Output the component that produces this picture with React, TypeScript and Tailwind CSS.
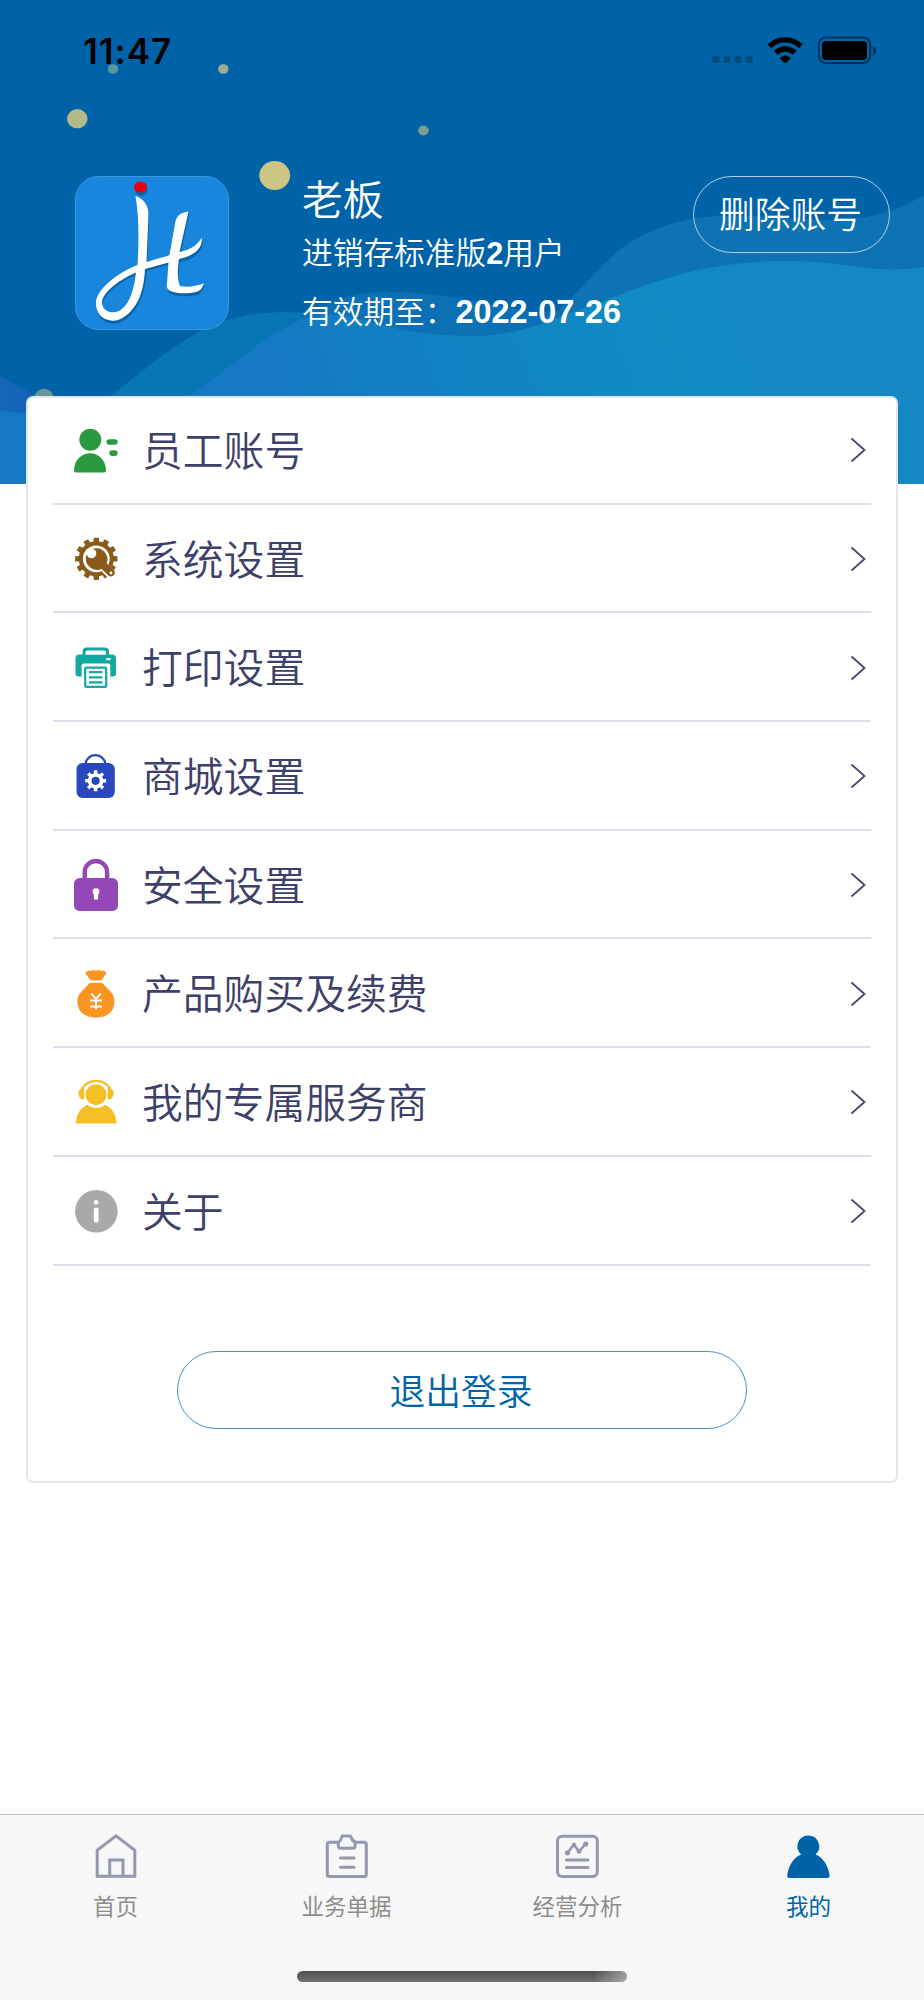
import React from "react";

const cjk = "font-['Noto_Sans_CJK_SC',sans-serif]";

function gearPath(cx: number, cy: number, teeth: number, outer: number, inner: number, fill = 0.5) {
  const step = (Math.PI * 2) / teeth;
  const pts: string[] = [];
  for (let i = 0; i < teeth; i++) {
    const a = i * step - Math.PI / 2;
    const half = (step * fill) / 2;
    const corners: [number, number][] = [
      [a - half * 1.15, inner],
      [a - half * 0.9, outer],
      [a + half * 0.9, outer],
      [a + half * 1.15, inner],
    ];
    for (const [t, r] of corners) {
      pts.push(`${(cx + Math.cos(t) * r).toFixed(2)} ${(cy + Math.sin(t) * r).toFixed(2)}`);
    }
  }
  return `M${pts.join("L")}Z`;
}

function Icon({ children }: { children: React.ReactNode }) {
  return (
    <svg width="46" height="54" viewBox="0 0 46 54" className="block shrink-0" fill="none">
      {children}
    </svg>
  );
}

const StaffIcon = () => (
  <Icon>
    <g fill="#2b9a3e">
      <circle cx="16.3" cy="16.7" r="11" />
      <path d="M0 47.5C0 37 7.5 30.3 16 30.3S32 37 32 47.5Q32 49.5 30 49.5H2Q0 49.5 0 47.5Z" />
      <rect x="32.5" y="16.2" width="11.2" height="5.6" rx="2.8" />
      <rect x="35.3" y="27.3" width="8.4" height="5.6" rx="2.8" />
    </g>
  </Icon>
);

const SystemIcon = () => (
  <Icon>
    <path d={gearPath(22.3, 26.8, 12, 21.3, 17.6, 0.52)} fill="#8a5a19" />
    <circle cx="22.3" cy="26.8" r="13.4" fill="#fff" />
    <path d="M30 35 37.500 42.500" stroke="#fff" strokeWidth="9.500" strokeLinecap="round" />
    <path
      d="M18.8 16.800A11.200 11.200 0 0 1 32.800 31.200L40 38.200A3.900 3.900 0 0 1 34.5 43.6L27.500 37A11.200 11.200 0 0 1 12.600 22.800L14.800 25.800 19.200 26.200 22.3 23.200 22 19Z"
      fill="#8a5a19"
    />
    <circle cx="37" cy="41" r="1.4" fill="#fff" />
  </Icon>
);

const PrintIcon = () => (
  <Icon>
    <g fill="#12a9a2">
      <path d="M8.6 13.500V10.5Q8.6 6.5 12.6 6.5H31Q35 6.5 35 10.5V13.500H38Q42 13.500 42 17.500V32.5Q42 35.5 39 35.5H36.3V24.5Q36.3 22.5 34.3 22.5H9.6Q7.6 22.5 7.6 24.5V35.5H4.5Q1.5 35.5 1.5 32.5V17.500Q1.5 13.500 5.5 13.500ZM11.5 13.800H32V11.6Q32 9.6 30 9.6H13.5Q11.5 9.6 11.5 11.6Z" />
    </g>
    <rect x="32" y="17" width="4.8" height="2.2" rx="1.1" fill="#fff" />
    <rect x="11.2" y="26.6" width="21" height="19.3" rx="1.2" fill="#fff" stroke="#12a9a2" strokeWidth="2.2" />
    <path d="M15 31.2H28.4M15 36.3H28.4M15 41.4H28.4" stroke="#12a9a2" strokeWidth="2.3" />
  </Icon>
);

const MallIcon = () => (
  <Icon>
    <path d="M11.4 15C13.2 3.2 29.6 3.2 31.5 15" stroke="#2948bd" strokeWidth="2.4" />
    <rect x="2.5" y="14" width="38.3" height="35" rx="6.2" fill="#2948bd" />
    <path d={gearPath(21.6, 31.8, 8, 10.6, 7.8, 0.48)} fill="#fff" />
    <circle cx="21.6" cy="31.8" r="4.1" fill="#2948bd" />
  </Icon>
);

const LockIcon = () => (
  <Icon>
    <path d="M10.7 22V14A11.2 11 0 0 1 33.1 14V22" stroke="#9448b5" strokeWidth="4.4" />
    <rect x="0" y="20" width="44" height="33" rx="5.6" fill="#9448b5" />
    <circle cx="22" cy="33.700" r="3.4" fill="#fff" />
    <rect x="19.900" y="34" width="4.200" height="8" rx="2" fill="#fff" />
  </Icon>
);

const MoneyIcon = () => (
  <Icon>
    <g fill="#f99520">
      <path d="M11.2 6.2Q13.6 2.4 17 4 19.2 2 22 4 24.7 2 27 4 30.6 2.4 32.4 6.2L28.4 12Q27.4 13.400 25.8 13.400H18.2Q16.6 13.400 15.6 12Z" />
      <path d="M16 15.8H28L36.5 24.6Q40.4 28.5 40.4 34.5C40.4 44.5 33.5 50.5 22 50.5S3.4 44.5 3.4 34.5Q3.4 28.5 7.5 24.6Z" />
    </g>
    <path d="M17 26.4 22 31.8 27 26.4M22 31.8V42.3M16 33.6H28M16 39.4H28" stroke="#fff" strokeWidth="2" />
  </Icon>
);

const ServiceIcon = () => (
  <Icon>
    <g fill="#f5be24">
      <circle cx="22" cy="19.7" r="10.5" />
      <path d="M2 48.6C2 38.5 7 32.5 13.3 29.7Q17.3 33 22.2 33T31 29.7C37.5 32.5 42.4 38.5 42.4 48.6Z" />
      <path d="M10.3 12.5V24.6C2.600 24.5 2.600 12.6 10.3 12.5Z" />
      <path d="M33.7 12.5V24.6C41.6 24.5 41.6 12.6 33.7 12.5Z" />
    </g>
    <path d="M8.2 13.5C14.5 3.3 29.7 3.3 36 13.5" stroke="#f5be24" strokeWidth="2.2" />
  </Icon>
);

const AboutIcon = () => (
  <Icon>
    <circle cx="22.4" cy="27.3" r="21.3" fill="#a9a9a9" />
    <circle cx="22.2" cy="18.3" r="2.3" fill="#fff" />
    <rect x="19.8" y="23.4" width="4.8" height="15.4" rx="2.4" fill="#fff" />
  </Icon>
);

const menu = [
  { label: "员工账号", icon: StaffIcon },
  { label: "系统设置", icon: SystemIcon },
  { label: "打印设置", icon: PrintIcon },
  { label: "商城设置", icon: MallIcon },
  { label: "安全设置", icon: LockIcon },
  { label: "产品购买及续费", icon: MoneyIcon },
  { label: "我的专属服务商", icon: ServiceIcon },
  { label: "关于", icon: AboutIcon },
];

function Backdrop() {
  return (
    <svg className="absolute left-0 top-0 block" width="924" height="484" viewBox="0 0 924 484">
      <defs>
        <linearGradient id="front" x1="180" y1="450" x2="740" y2="250" gradientUnits="userSpaceOnUse">
          <stop offset="0" stopColor="#1678c6" />
          <stop offset="0.2" stopColor="#1579c3" />
          <stop offset="0.5" stopColor="#1083c3" />
          <stop offset="0.8" stopColor="#118bc3" />
          <stop offset="1" stopColor="#1488c3" />
        </linearGradient>
        <linearGradient id="corner" x1="0" y1="0" x2="60" y2="0" gradientUnits="userSpaceOnUse">
          <stop offset="0" stopColor="#1466b9" />
          <stop offset="1" stopColor="#1060b0" />
        </linearGradient>
      </defs>
      <rect width="924" height="484" fill="#0063a7" />
      <path d="M530 336C570 302 590 276 619 250C645 231 680 216 730 215.500C790 216 820 224 866 217C890 213 908 204 924 195V400H530Z" fill="#0d73b3" />
      <path d="M110 396C145 370 190 330 225 321C250 312 275 311 310 313L340 340V400H105Z" fill="#0776b4" />
      <path d="M290 322C320 306 340 293 385 292C440 292 480 301 515 309C535 313 550 312 568 310L530 360H300Z" fill="#0b70b4" />
      <path d="M188 396C225 372 258 340 300 320C325 311 345 315 370 322C400 331 440 337 482 336C530 333 560 315 600 303C660 276 720 261 782 261C840 261 850 269 892 269.500C905 269.500 915 268 924 267V484H188Z" fill="url(#front)" />
      <path d="M0 376 37 396V420H0Z" fill="url(#corner)" />
      <path d="M0 410Q14 413 40 413.500V484H0Z" fill="#1678c4" />
      <circle cx="44" cy="398.500" r="9.800" fill="#67959a" />
      <g>
        <ellipse cx="113" cy="69" rx="5.200" ry="4.800" fill="#5e94a0" />
        <ellipse cx="223.300" cy="69" rx="5.200" ry="4.800" fill="#9dae92" />
        <ellipse cx="77.300" cy="118.700" rx="10.300" ry="9.600" fill="#b2b98b" />
        <ellipse cx="423.500" cy="130.500" rx="5.200" ry="4.900" fill="#7b9e94" />
        <ellipse cx="274.700" cy="175.500" rx="15.400" ry="14.400" fill="#cdc584" />
      </g>
    </svg>
  );
}

function Logo() {
  return (
    <svg width="154" height="154" viewBox="0 0 154 154" className="block shrink-0">
      <rect x="0.500" y="0.500" width="153" height="153" rx="23" fill="#1786dc" stroke="#3a97e0" />
      <g transform="translate(.8 2)" fill="#0b5797" opacity="0.75">
        <ellipse cx="65.500" cy="12" rx="6.200" ry="5.700" />
        <path d="M60.500 20C68 22 73.500 29 73.500 38L71.500 88C86 82 90 82 94.500 80L100.500 45C102.500 39 105.500 37 113.500 35.500L104.500 77.500C116 75 123.500 69 126.500 61.500C128.500 72 119 82 104 84C102 97 102.500 104 105 110C112 112 121 110 128.800 107.500C127 113 125 116 121 117C114 118.500 102 119 97 116.500C92 115 91.500 112 92 108L93.500 86.500L71 93C70 112 65 126 55 137C49 143 43 146.500 36 145.500C26 144.500 20.500 137 21 127C22 113 42 97 62.500 89C64 65 64 40 60.500 20ZM61 96.500C42 105 27 117 27 127C28 136 37 138 44 135C55 129 59 113 61 96.500Z" fillRule="evenodd" />
      </g>
      <ellipse cx="65.500" cy="11" rx="6.500" ry="5.500" fill="#e60012" />
      <path d="M60.500 20C68 22 73.500 29 73.500 38L71.500 86C84 82 90 81 94.500 79L100.500 45C102.500 39 105.500 37 113.500 35.500L104.500 76C116 74 123.500 68 126.500 61.500C128.500 72 119 80 104 83C102 97 102.500 104 105 110C112 112 121 110 128.800 107.500C127 113 125 115 121 116C114 117.500 102 118 97 115.500C92 114 91.500 111 92 107L93.500 86.500L70 93C69 112 65 126 55 136C49 142 43 145.500 36 144.500C26 143.500 20.500 136 21 126C22 113 42 97 62.500 89C64 65 64 40 60.500 20ZM61 96.500C42 105 27 117 27 127C28 136 37 138 44 135C55 129 59 113 61 96.500Z" fill="#fff" fillRule="evenodd" />
    </svg>
  );
}

function StatusBar() {
  return (
    <div className="flex h-[100px] items-start justify-between pl-[83px] pr-[46px]">
      <div className="mt-[28.5px] font-['Inter',sans-serif] text-[35px] font-semibold leading-[44px] tracking-[1px] text-black">11:47</div>
      <svg width="168" height="34" viewBox="710 33 168 34" className="mt-[33px] block">
        <g fill="#000" opacity="0.22">
          <rect x="712" y="56" width="7.500" height="7" rx="2" />
          <rect x="723" y="56" width="7.500" height="7" rx="2" />
          <rect x="734.200" y="56" width="7.500" height="7" rx="2" />
          <rect x="745.400" y="56" width="7.500" height="7" rx="2" />
        </g>
        <g fill="none" stroke="#000" strokeWidth="5.400">
          <path d="M769.500 46.300A22.500 22.500 0 0 1 801 46.300" />
          <path d="M775.800 52.800A13.600 13.600 0 0 1 794.700 52.800" />
        </g>
        <path d="M785.300 63 779.900 58.300Q785.300 53 790.700 58.300Z" fill="#000" stroke="#000" strokeWidth="0.500" />
        <rect x="818.800" y="37.500" width="51.400" height="25.500" rx="7" fill="none" stroke="#00355b" strokeWidth="2" />
        <rect x="822" y="41" width="45" height="19" rx="4" fill="#000" />
        <path d="M873 46.200Q876.200 47.500 876.200 50.500T873 55.200Z" fill="#00355b" />
      </svg>
    </div>
  );
}

const HomeIcon = () => (
  <path d="M97.200 1850.200 116 1835.800 134.800 1850.200V1876.200H97.200ZM109.700 1876V1860H123V1876" />
);
const BillIcon = () => (
  <>
    <path d="M339 1842.300H329.500Q327.500 1842.300 327.500 1844.300V1874.500Q327.500 1876.500 329.500 1876.500H364.500Q366.500 1876.500 366.500 1874.500V1844.300Q366.500 1842.300 364.500 1842.300H355" />
    <path d="M342.500 1836H350.500L353 1840.500Q355.300 1841.500 355.300 1843.500V1846Q355.300 1848.200 353 1848.200H340.800Q338.500 1848.200 338.500 1846V1843.500Q338.500 1841.500 340.600 1840.500Z" />
    <path d="M340.700 1858H354.300M340.700 1867.300H354.300" strokeLinecap="round" />
  </>
);
const ChartIcon = () => (
  <>
    <rect x="557.500" y="1836.300" width="39.800" height="40.200" rx="4.500" />
    <path d="M566.300 1860H588M566.300 1867.600H588" strokeLinecap="round" />
    <path d="M567.500 1853 573.800 1844.500 579 1851.500 585.500 1844" strokeWidth="2.600" />
    <g fill="#9498ae" stroke="none">
      <circle cx="567.500" cy="1852.800" r="2.600" />
      <circle cx="574" cy="1845" r="2.200" />
      <circle cx="579" cy="1851.500" r="2.400" />
      <circle cx="585.700" cy="1844" r="2.600" />
    </g>
  </>
);
const MeIcon = () => (
  <path
    d="M808.300 1835.500A10.900 10.900 0 0 1 815.500 1854.600C823 1857.500 828 1865.500 829.600 1875Q829.800 1878 827 1878H789.800Q787 1878 787.200 1875C788.800 1865.500 793.500 1857.500 801.200 1854.600A10.900 10.900 0 0 1 808.300 1835.500Z"
    fill="#0063a7"
    stroke="none"
  />
);

const tabs = [
  { label: "首页", icon: HomeIcon, box: "94 1833 44 46", color: "text-[#8c8c8c]" },
  { label: "业务单据", icon: BillIcon, box: "325.200 1833 44 46", color: "text-[#8c8c8c]" },
  { label: "经营分析", icon: ChartIcon, box: "556 1833 44 46", color: "text-[#8c8c8c]" },
  { label: "我的", icon: MeIcon, box: "787 1833 44 46", color: "text-[#0063a7]" },
];

export default function App() {
  return (
    <div className={`relative flex h-[2000px] w-[924px] flex-col overflow-hidden bg-white ${cjk}`}>
      <Backdrop />
      <div className="relative flex grow flex-col">
        <StatusBar />
        <header className="flex h-[296px] items-start pl-[75px] pr-[34px] pt-[76px] text-white">
          <Logo />
          <div className="-mt-[2px] ml-[73px] flex flex-col">
            <h1 className="h-[49px] text-[40.8px] font-[350] leading-[48px]">老板</h1>
            <p className="mt-[5px] h-[46px] whitespace-nowrap text-[30.7px] font-[350] leading-[46px]">
              进销存标准版<span className="font-['Liberation_Sans',sans-serif] font-bold">2</span>用户
            </p>
            <p className="mt-[13px] h-[46px] whitespace-nowrap text-[30.7px] font-[350] leading-[46px]">
              有效期至：
              <span className="font-['Liberation_Sans',sans-serif] text-[32.4px] font-bold">2022-07-26</span>
            </p>
          </div>
          <button className="-mt-[0.5px] ml-auto flex h-[77px] w-[197px] items-center justify-center whitespace-nowrap rounded-full border border-[#b3d0e5] pb-[2px] pr-[2px] text-[35.8px] font-[350]">
            删除账号
          </button>
        </header>

        <main className="mx-[26px] flex h-[1087px] flex-col rounded-[7px] border-2 border-[#e3e6ec] bg-white px-[25px]">
          <ul className="-mt-[2px] flex flex-col">
            {menu.map(({ label, icon: Glyph }) => (
              <li key={label} className="flex h-[108.7px] items-center border-b-2 border-[#dcdfe9] pl-[21px] pr-[5px] pt-[2px]">
                <Glyph />
                <span className="-mt-[3px] ml-[22px] grow text-[40.8px] font-[350] leading-[60px] text-[#3d4069]">{label}</span>
                <svg width="16" height="26" viewBox="0 0 16 26" className="block" fill="none">
                  <path d="M1.500 1.500 14.500 13 1.500 24.500" stroke="#45476f" strokeWidth="1.800" />
                </svg>
              </li>
            ))}
          </ul>
          <button className="mx-auto mt-[85px] flex h-[78px] w-[570px] items-center justify-center rounded-full border border-[#4a90c2] pr-[2px] text-[35.8px] font-[350] text-[#0063a7]">
            退出登录
          </button>
        </main>
      </div>

      <nav className="relative flex h-[186px] shrink-0 flex-col items-center border-t border-[#bdbdbd] bg-[#f7f7f7]">
        <div className="flex w-full pt-[18px]">
          {tabs.map(({ label, icon: Glyph, box, color }) => (
            <a key={label} className={`flex w-1/4 flex-col items-center ${color}`}>
              <svg width="44" height="46" viewBox={box} fill="none" stroke="#9498ae" strokeWidth="3" className="block">
                <Glyph />
              </svg>
              <span className="mt-[9px] text-[22.5px] leading-[34px]">{label}</span>
            </a>
          ))}
        </div>
        <div className="mt-[49px] h-[11px] w-[330px] rounded-full bg-[linear-gradient(90deg,transparent_90%,#ffffff66_100%),linear-gradient(#505050,#717171)]" />
      </nav>
    </div>
  );
}
